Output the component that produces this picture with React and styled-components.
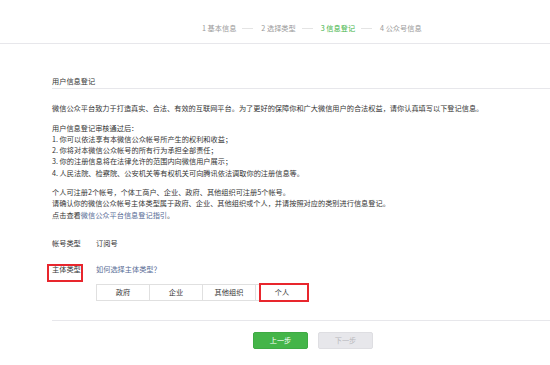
import React from 'react';
import styled, { createGlobalStyle } from 'styled-components';

const GlobalStyle = createGlobalStyle`
    body {
        margin: 0;
        background: #fff;
        font-family: "Noto Sans CJK SC", "Noto Sans", "Liberation Sans", sans-serif;
        color: #353535;
    }
`;

const green = '#44b549';
const link = '#576b95';
const line = '#e7e7eb';

const Header = styled.header`
    height: 44px;
    box-sizing: border-box;
    border-bottom: 1px solid ${line};
    padding: 22px 0 0 202px;
    display: flex;
    align-items: flex-start;
`;

const Step = styled.span`
    font-size: 7.2px;
    line-height: 12px;
    white-space: nowrap;
    color: ${p => (p.$active ? green : '#9a9a9a')};
`;

const StepSep = styled.span`
    width: 11px;
    height: 1px;
    margin: 6px 8px 0 6px;
    background: #e4e4e4;
`;

const Main = styled.main`
    padding-left: 52px;
`;

const Title = styled.h2`
    margin: 0;
    padding: 31px 0 1px;
    font-size: 7.2px;
    line-height: 12px;
    font-weight: normal;
    border-bottom: 1px solid ${line};
`;

const Notice = styled.div`
    padding-top: 14.3px;
    font-size: 7.2px;
    line-height: 11.3px;
    white-space: nowrap;
`;

const Para = styled.p`
    margin: 0 0 8px;
`;

const Link = styled.a`
    color: ${link};
    text-decoration: none;
`;

const Form = styled.div`
    margin-top: 17.3px;
    font-size: 7.2px;
    line-height: 11.3px;
`;

const Row = styled.div`
    display: flex;
    margin-bottom: ${p => p.$gap || 0}px;
`;

const Label = styled.div`
    width: 44px;
    flex: none;
`;

const Mark = styled.span`
    position: relative;
    &::after {
        content: '';
        position: absolute;
        left: -5px;
        right: -2px;
        top: 0;
        bottom: -7.4px;
        border: 2px solid #e8262d;
    }
`;

const Field = styled.div`
    display: flex;
    flex-direction: column;
    align-items: flex-start;
`;

const Segments = styled.div`
    display: flex;
    margin-top: 8.4px;
`;

const Segment = styled.div`
    position: relative;
    width: 54px;
    height: 17px;
    box-sizing: border-box;
    border: 1px solid #e0e0e0;
    background: #fff;
    text-align: center;
    line-height: 15px;
    & + & {
        margin-left: -1px;
    }
    ${p => p.$picked && `
        &::after {
            content: '';
            position: absolute;
            left: 3px;
            right: -1px;
            top: -2px;
            bottom: -2px;
            border: 2px solid #e8262d;
        }
    `}
`;

const Footer = styled.div`
    margin-top: 19.5px;
    border-top: 1px solid ${line};
    padding: 10.5px 0 0 201px;
    display: flex;
    gap: 10px;
`;

const Button = styled.button`
    width: 55px;
    height: 17px;
    padding: 0;
    border-radius: 2px;
    font-family: inherit;
    font-size: 7.2px;
    line-height: 15px;
    border: 1px solid ${p => (p.$primary ? '#3eaa44' : '#dedee2')};
    background: ${p => (p.$primary ? green : '#e7e7eb')};
    color: ${p => (p.$primary ? '#fff' : '#b8b8bc')};
`;

const steps = ['1 基本信息', '2 选择类型', '3 信息登记', '4 公众号信息'];
const types = ['政府', '企业', '其他组织', '个人'];

const App = () => {
    return (
        <>
            <GlobalStyle />
            <Header>
                {steps.map((s, i) => (
                    <React.Fragment key={s}>
                        {i > 0 && <StepSep />}
                        <Step $active={i === 2}>{s}</Step>
                    </React.Fragment>
                ))}
            </Header>
            <Main>
                <Title>用户信息登记</Title>
                <Notice>
                    <Para>微信公众平台致力于打造真实、合法、有效的互联网平台。为了更好的保障你和广大微信用户的合法权益，请你认真填写以下登记信息。</Para>
                    <Para>
                        用户信息登记审核通过后：<br />
                        1. 你可以依法享有本微信公众帐号所产生的权利和收益；<br />
                        2. 你将对本微信公众帐号的所有行为承担全部责任；<br />
                        3. 你的注册信息将在法律允许的范围内向微信用户展示；<br />
                        4. 人民法院、检察院、公安机关等有权机关可向腾讯依法调取你的注册信息等。
                    </Para>
                    <Para>
                        个人可注册2个帐号，个体工商户、企业、政府、其他组织可注册5个帐号。<br />
                        请确认你的微信公众帐号主体类型属于政府、企业、其他组织或个人，并请按照对应的类别进行信息登记。<br />
                        点击查看<Link href="#">微信公众平台信息登记指引</Link>。
                    </Para>
                </Notice>
                <Form>
                    <Row $gap={14.7}>
                        <Label>帐号类型</Label>
                        <div>订阅号</div>
                    </Row>
                    <Row>
                        <Label><Mark>主体类型</Mark></Label>
                        <Field>
                            <Link href="#">如何选择主体类型？</Link>
                            <Segments>
                                {types.map(t => (
                                    <Segment key={t} $picked={t === '个人'}>{t}</Segment>
                                ))}
                            </Segments>
                        </Field>
                    </Row>
                </Form>
                <Footer>
                    <Button $primary>上一步</Button>
                    <Button disabled>下一步</Button>
                </Footer>
            </Main>
        </>
    );
};

export default App;
